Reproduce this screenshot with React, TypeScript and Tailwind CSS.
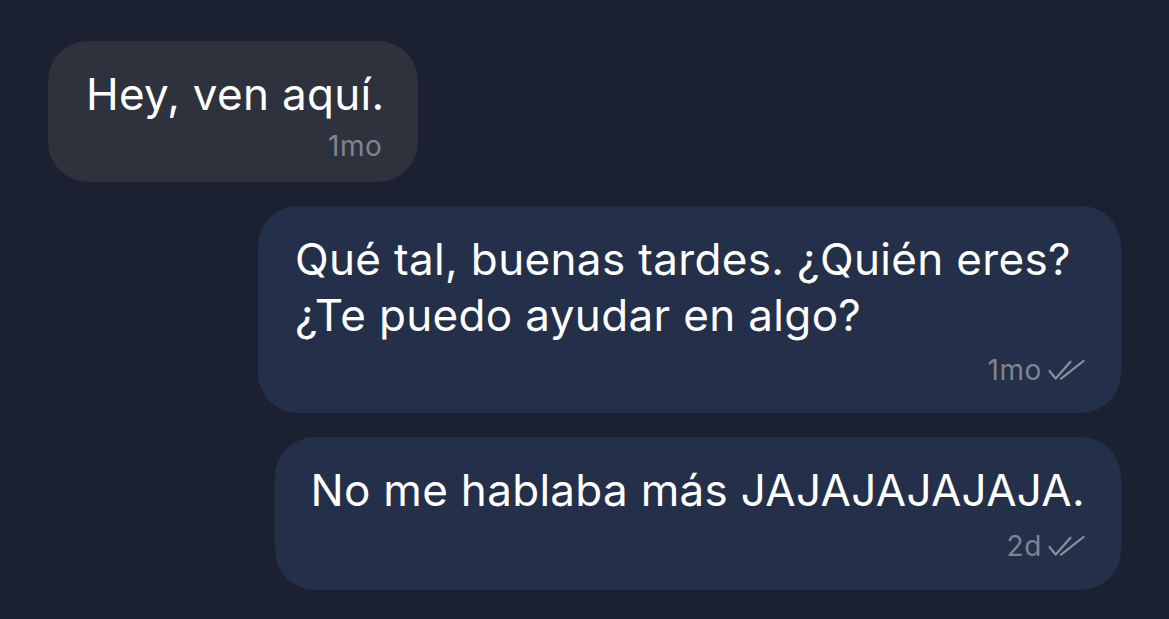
const DoubleCheck = () => (
  <svg width="38" height="22" viewBox="0 0 38 22" fill="none" stroke="#8b909a" strokeWidth={2.2} strokeLinecap="round" strokeLinejoin="round" className="ml-[5px]">
    <path d="M2.5 12 L8.7 19.6 L23.5 2.8" />
    <path d="M14 19.6 L36.5 2" />
  </svg>
);

export default function App() {
  return (
    <div
      className="w-[1169px] h-[619px] bg-[#1b2130] px-12 pt-[41px] flex flex-col gap-6 overflow-hidden"
      style={{ fontFamily: 'Inter, "Noto Sans", sans-serif' }}
    >
      {/* incoming */}
      <div className="flex justify-start">
        <div className="bg-[#2e323d] rounded-[40px] pl-[38px] pr-[34px] pt-[25px] pb-[23px]">
          <p className="text-[44px] leading-[56px] text-white tracking-[0.3px]">Hey, ven aquí.</p>
          <div className="flex justify-end mt-[11px] pr-[2px]">
            <span className="text-[28px] leading-[26px] text-[#80848e] tracking-[0.6px]">1mo</span>
          </div>
        </div>
      </div>

      {/* outgoing */}
      <div className="flex justify-end">
        <div className="bg-[#243049] rounded-[40px] pl-[37px] pr-[36px] pt-[25px] pb-[30px] max-w-[863px]">
          <p className="text-[44px] leading-[56px] text-white tracking-[0.35px]">
            Qué tal, buenas tardes. ¿Quién eres? ¿Te puedo ayudar en algo?
          </p>
          <div className="flex justify-end items-center mt-[14px] h-[26px]">
            <span className="text-[28px] leading-[26px] text-[#80848e] tracking-[0.6px]">1mo</span>
            <DoubleCheck />
          </div>
        </div>
      </div>

      <div className="flex justify-end">
        <div className="bg-[#243049] rounded-[40px] pl-[36px] pr-[36px] pt-[25px] pb-[31px]">
          <p className="text-[44px] leading-[56px] text-white tracking-[0.3px]">No me hablaba más JAJAJAJAJAJA.</p>
          <div className="flex justify-end items-center mt-[15px] h-[26px]">
            <span className="text-[28px] leading-[26px] text-[#80848e] tracking-[0.6px]">2d</span>
            <DoubleCheck />
          </div>
        </div>
      </div>
    </div>
  );
}
